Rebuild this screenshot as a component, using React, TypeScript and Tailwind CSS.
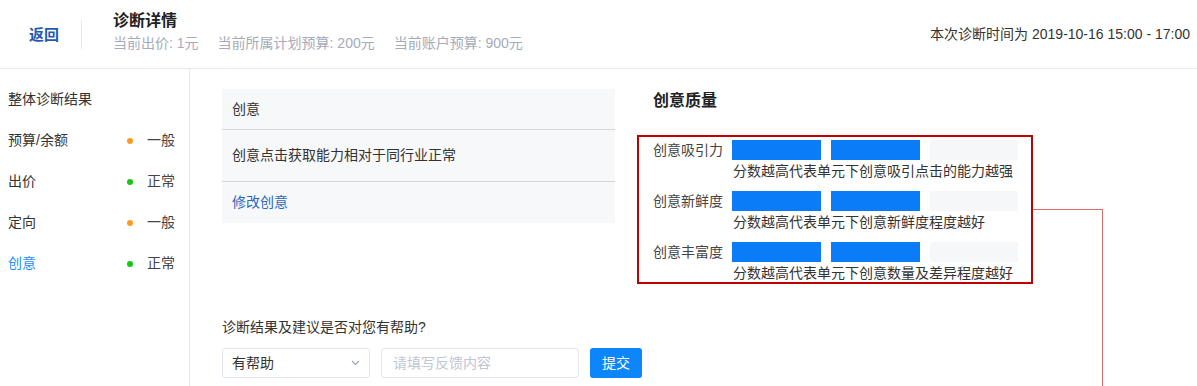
import React from "react";

const font = { fontFamily: '"Liberation Sans", "Noto Sans CJK SC", sans-serif' };

function SideItem({ label, status, dot, active }: { label: string; status?: string; dot?: string; active?: boolean }) {
  return (
    <div className="h-[41px] flex items-center pl-[8px] text-[14px]">
      <span className={`w-[119px] ${active ? "text-[#1890ff]" : "text-[#333]"}`}>{label}</span>
      {status && (
        <>
          <span className={`w-[6px] h-[6px] rounded-full ${dot}`} />
          <span className="ml-[14px] text-[#444]">{status}</span>
        </>
      )}
    </div>
  );
}

function QualityRow({ label, desc }: { label: string; desc: string }) {
  return (
    <div className="flex">
      <div className="w-[79px] text-[14px] leading-[20px] text-[#444]">{label}</div>
      <div className="flex flex-col">
        <div className="flex gap-[10px]">
          <div className="w-[89px] h-[20px] bg-[#0a7cf8]" />
          <div className="w-[89px] h-[20px] bg-[#0a7cf8]" />
          <div className="w-[88px] h-[20px] bg-[#f6f7f9]" />
        </div>
        <div className="h-[20px] leading-[22px] text-[14px] text-[#333] pl-[1px] whitespace-nowrap">{desc}</div>
      </div>
    </div>
  );
}

export default function App() {
  return (
    <div className="relative w-[1197px] h-[386px] overflow-hidden bg-white" style={font}>
      {/* header */}
      <div className="h-[69px] border-b border-[#e8e9ef] flex items-center">
        <div className="w-[81px] pl-[29px] pt-[2px] text-[15px] font-bold text-[#1f5bb0]">返回</div>
        <div className="w-px h-[29px] bg-[#e8e9ef] mt-[1px]" />
        <div className="ml-[31px] flex flex-col">
          <div className="text-[16px] font-bold text-[#222] leading-[22px] -mt-[5px]">诊断详情</div>
          <div className="text-[14px] text-[#a4abba] leading-[20px] mt-[1px] flex gap-[19px] whitespace-nowrap">
            <span>当前出价: 1元</span>
            <span>当前所属计划预算: 200元</span>
            <span>当前账户预算: 900元</span>
          </div>
        </div>
        <div className="ml-auto pr-[7px] text-[14px] text-[#333] pt-[1px] whitespace-nowrap">本次诊断时间为 2019-10-16 15:00 - 17:00</div>
      </div>
      {/* body */}
      <div className="flex h-[317px]">
        <div className="w-[190px] shrink-0 border-r border-[#e8e9ef] pt-[10px]">
          <SideItem label="整体诊断结果" />
          <SideItem label="预算/余额" status="一般" dot="bg-[#ff9a1f]" />
          <SideItem label="出价" status="正常" dot="bg-[#14c814]" />
          <SideItem label="定向" status="一般" dot="bg-[#ff9a1f]" />
          <SideItem label="创意" status="正常" dot="bg-[#14c814]" active />
        </div>
        <div className="flex pl-[32px] pt-[20px]">
          <div className="w-[393px] shrink-0 flex flex-col">
            <div className="bg-[#f7f8fa] text-[14px] text-[#333]">
              <div className="h-[41px] flex items-center px-[10px] border-b border-[#d6d7da]">创意</div>
              <div className="h-[52px] flex items-center px-[10px] border-b border-[#d6d7da]">创意点击获取能力相对于同行业正常</div>
              <div className="h-[41px] flex items-center px-[10px] text-[#2a68bd]">修改创意</div>
            </div>
            <div className="mt-[94px] text-[14px] text-[#333] leading-[20px]">诊断结果及建议是否对您有帮助?</div>
            <div className="mt-[11px] flex items-center">
              <div className="shrink-0 w-[148px] h-[30px] border border-[#e3e6ee] rounded-[3px] flex items-center justify-between px-[9px] text-[14px] text-[#333]">
                <span>有帮助</span>
                <svg width="9" height="6" viewBox="0 0 9 6" fill="none"><path d="M1 1l3.5 3.5L8 1" stroke="#9aa3b5" strokeWidth="1.1" /></svg>
              </div>
              <div className="shrink-0 ml-[11px] w-[198px] h-[30px] border border-[#e3e6ee] rounded-[3px] flex items-center px-[11px] text-[14px] text-[#c0c6d4]">请填写反馈内容</div>
              <div className="shrink-0 ml-[11px] w-[52px] h-[30px] rounded-[3px] bg-[#0d85fb] text-white text-[14px] flex items-center justify-center">提交</div>
            </div>
          </div>
          <div className="ml-[22px] flex flex-col">
            <div className="pl-[16px] text-[16px] font-bold text-[#222] leading-[20px] mt-[2px]">创意质量</div>
            <div className="mt-[24px] w-[396px] h-[149px] border-2 border-[#c00000] pl-[14px] pt-[3px] flex flex-col gap-[11px]">
              <QualityRow label="创意吸引力" desc="分数越高代表单元下创意吸引点击的能力越强" />
              <QualityRow label="创意新鲜度" desc="分数越高代表单元下创意新鲜度程度越好" />
              <QualityRow label="创意丰富度" desc="分数越高代表单元下创意数量及差异程度越好" />
            </div>
          </div>
        </div>
      </div>
      {/* annotation connector */}
      <div className="absolute left-[1033px] top-[209px] w-[70px] h-[200px] border-t-[1.5px] border-r-[1.5px] border-[#e06a6a]" />
    </div>
  );
}
